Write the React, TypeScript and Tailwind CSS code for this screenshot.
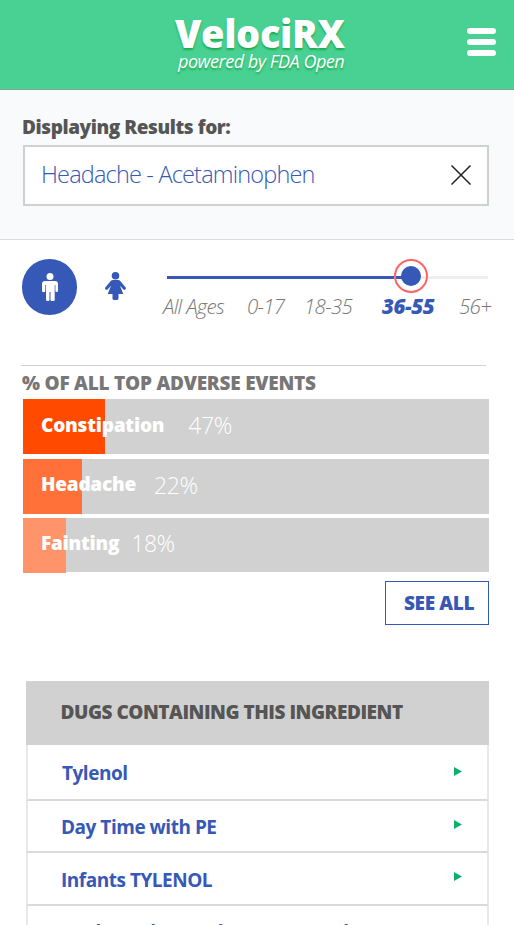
import React from "react";

const events = [
  { name: "Constipation", value: "47%", row: "h-[55px] mb-[5px]", fill: "w-[82px] bg-[#ff4a00]", gap: "ml-[24px]", label: "tracking-[-0.2px]", lift: "-mt-[2px]" },
  { name: "Headache", value: "22%", row: "h-[55px] mb-[4px]", fill: "w-[59px] bg-[#ff7139]", gap: "ml-[18px]", label: "mb-px tracking-[-0.25px]", lift: "-mt-[3px]" },
  { name: "Fainting", value: "18%", row: "h-[54px]", fill: "w-[43px] bg-[#ff936a]", gap: "ml-[12px]", label: "tracking-[-0.25px]", lift: "-mt-[5px]" },
];

const drugs = [
  { name: "Tylenol", row: "h-[56px]", pad: "pl-[34px]", text: "mt-[2px]", arrow: "mb-px" },
  { name: "Day Time with PE", row: "h-[52px]", pad: "pl-[33px]", text: "mt-[2px]", arrow: "mb-[3px]" },
  { name: "Infants TYLENOL", row: "h-[53px]", pad: "pl-[33px]", text: "mt-[3px]", arrow: "mb-[4px]" },
];

function Man() {
  return (
    <svg className="h-[28px] w-[16px]" viewBox="0 0 16 28" fill="currentColor">
      <circle cx="8" cy="3.5" r="3.5" />
      <path d="M3 8h10q3 0 3 3v6.7a1.3 1.3 0 0 1-2.6 0V12h-.7v14.7a1.3 1.3 0 0 1-1.3 1.3H9.8a1.3 1.3 0 0 1-1.3-1.3V19h-1v7.7A1.3 1.3 0 0 1 6.2 28H5.3A1.3 1.3 0 0 1 4 26.7V12h-.7v5.7a1.3 1.3 0 0 1-3.3 0V11q0-3 3-3z" />
    </svg>
  );
}

function Woman() {
  return (
    <svg className="h-[28px] w-[21px]" viewBox="0 0 21 28" fill="currentColor">
      <circle cx="10.5" cy="3.8" r="3.8" />
      <path d="M8 8h5q1.5 0 2.5 1.2l5 6.1a1.5 1.5 0 0 1-2.3 2L15 13.7l3.3 8.3H13.5v4.6a1.4 1.4 0 0 1-1.4 1.4H8.9a1.4 1.4 0 0 1-1.4-1.4V22H2.7L6 13.7l-3.2 3.6a1.5 1.5 0 0 1-2.3-2l5-6.1Q6.5 8 8 8z" />
    </svg>
  );
}

export default function App() {
  return (
    <div className="h-[925px] w-[514px] overflow-hidden bg-white font-['Open_Sans',sans-serif] whitespace-nowrap">
      <header className="flex h-[90px] justify-between border-b border-[#7fa995] bg-[#48d192] pl-[175px] text-white">
        <div className="pt-[15px]">
          <h1 className="text-[38px] leading-[36px] font-extrabold tracking-[-0.35px] [text-shadow:0_2px_2px_#22a94e]">VelociRX</h1>
          <p className="ml-[3px] text-[18px] leading-[20px] italic tracking-[-0.46px] [text-shadow:0_2px_2px_#22a94e]">powered by FDA Open</p>
        </div>
        <div className="mt-[28px] mr-[18px] flex flex-col gap-[5px]">
          <i className="h-[6px] w-[29px] rounded-full bg-white" />
          <i className="h-[6px] w-[29px] rounded-full bg-white" />
          <i className="h-[6px] w-[29px] rounded-full bg-white" />
        </div>
      </header>

      <section className="h-[150px] border-b border-[#dcdcdc] bg-[#f9fafc] px-[23px] pt-[24px]">
        <h2 className="-ml-px h-[31px] text-[19px] leading-[26px] font-extrabold tracking-[-0.43px] text-[#555]">Displaying Results for:</h2>
        <div className="flex h-[61px] w-[466px] items-center justify-between border-2 border-[#d0d0d0] bg-white pr-[16px] pl-[16px] text-[23.5px] font-light tracking-[-0.82px] text-[#3658b7]">
          <span className="-mt-[2px]">Headache - Acetaminophen</span>
          <svg className="-mt-px h-[20px] w-[20px]" viewBox="0 0 20 20" stroke="#222" strokeWidth="1.5"><path d="M.5.5l19 19M19.5.5l-19 19" /></svg>
        </div>
      </section>

      <section className="mt-[19px] ml-[22px] flex h-[106px]">
        <div className="flex h-[56px] w-[55px] shrink-0 items-center justify-center rounded-full bg-[#3658b7] text-white"><Man /></div>
        <div className="mt-[13px] ml-[28px] text-[#3658b7]"><Woman /></div>
        <div className="ml-[37px]">
          <div className="ml-[4px] flex h-[34px] w-[321px] items-center">
            <i className="mt-[2px] h-[3px] w-[227px] bg-[#3658b7]" />
            <div className="flex h-[34px] w-[34px] items-center justify-center rounded-full border-2 border-[#ff6464] bg-[linear-gradient(90deg,#3658b7_50%,#eeeeee_50%)] bg-[length:100%_3px] bg-[position:0_15px] bg-no-repeat">
              <i className="h-[20px] w-[20px] rounded-full bg-[#3658b7]" />
            </div>
            <i className="mt-[2px] h-[3px] w-[60px] bg-[#eee]" />
          </div>
          <div className="grid grid-cols-[84px_57px_78px_77px_40px] text-[20.5px] leading-[26px] font-light italic tracking-[-0.7px] text-[#777]">
            <span>All Ages</span><span>0-17</span><span>18-35</span><b className="font-extrabold tracking-[-0.4px] text-[#3658b7]">36-55</b><span>56+</span>
          </div>
        </div>
      </section>

      <section className="ml-[23px] w-[466px]">
        <div className="-ml-[2px] h-[34px] w-[465px] border-t border-[#d2d2d2] pt-[4px] pl-px text-[19px] leading-[26px] font-extrabold tracking-[-0.23px] text-[#777]">% OF ALL TOP ADVERSE EVENTS</div>
        {events.map((e) => (
          <div key={e.name} className={`grid bg-[#d1d1d1] text-white ${e.row}`}>
            <i className={`col-start-1 row-start-1 h-[55px] ${e.fill}`} />
            <div className={`z-10 col-start-1 row-start-1 flex items-center pl-[18px] ${e.lift}`}>
              <b className={`text-[19px] font-extrabold ${e.label}`}>{e.name}</b>
              <span className={`text-[23px] font-light tracking-[-0.4px] ${e.gap}`}>{e.value}</span>
            </div>
          </div>
        ))}
        <div className="mt-[9px] ml-auto flex h-[44px] w-[104px] items-center border border-[#3658b7] bg-white pl-[18px] text-[19px] font-extrabold tracking-[-0.35px] text-[#3658b7]">SEE ALL</div>
      </section>

      <section className="mt-[56px] ml-[26px] w-[463px]">
        <h2 className="h-[64px] bg-[#d1d1d1] pl-[34.5px] text-[19px] leading-[62px] font-extrabold tracking-[-0.47px] text-[#555]">DUGS CONTAINING THIS INGREDIENT</h2>
        {drugs.map((d) => (
          <div key={d.name} className={`flex items-center justify-between border-x-2 border-b-2 border-x-[#e8e8e8] border-b-[#dadada] pr-[25px] ${d.pad} ${d.row}`}>
            <b className={`text-[19px] font-bold tracking-[-0.48px] text-[#3658b7] ${d.text}`}>{d.name}</b>
            <svg className={`h-[9px] w-[8px] ${d.arrow}`} viewBox="0 0 8 9"><path d="M0 0l8 4.5-8 4.5z" fill="#0bb26b" /></svg>
          </div>
        ))}
        <div className="h-[56px] border-x-2 border-[#e8e8e8] pt-[13px] pl-[33px] text-[19px] leading-[26px] font-bold tracking-[-0.5px] text-[#3658b7]">Meda Caplets Each 500mg Cough</div>
      </section>
    </div>
  );
}
